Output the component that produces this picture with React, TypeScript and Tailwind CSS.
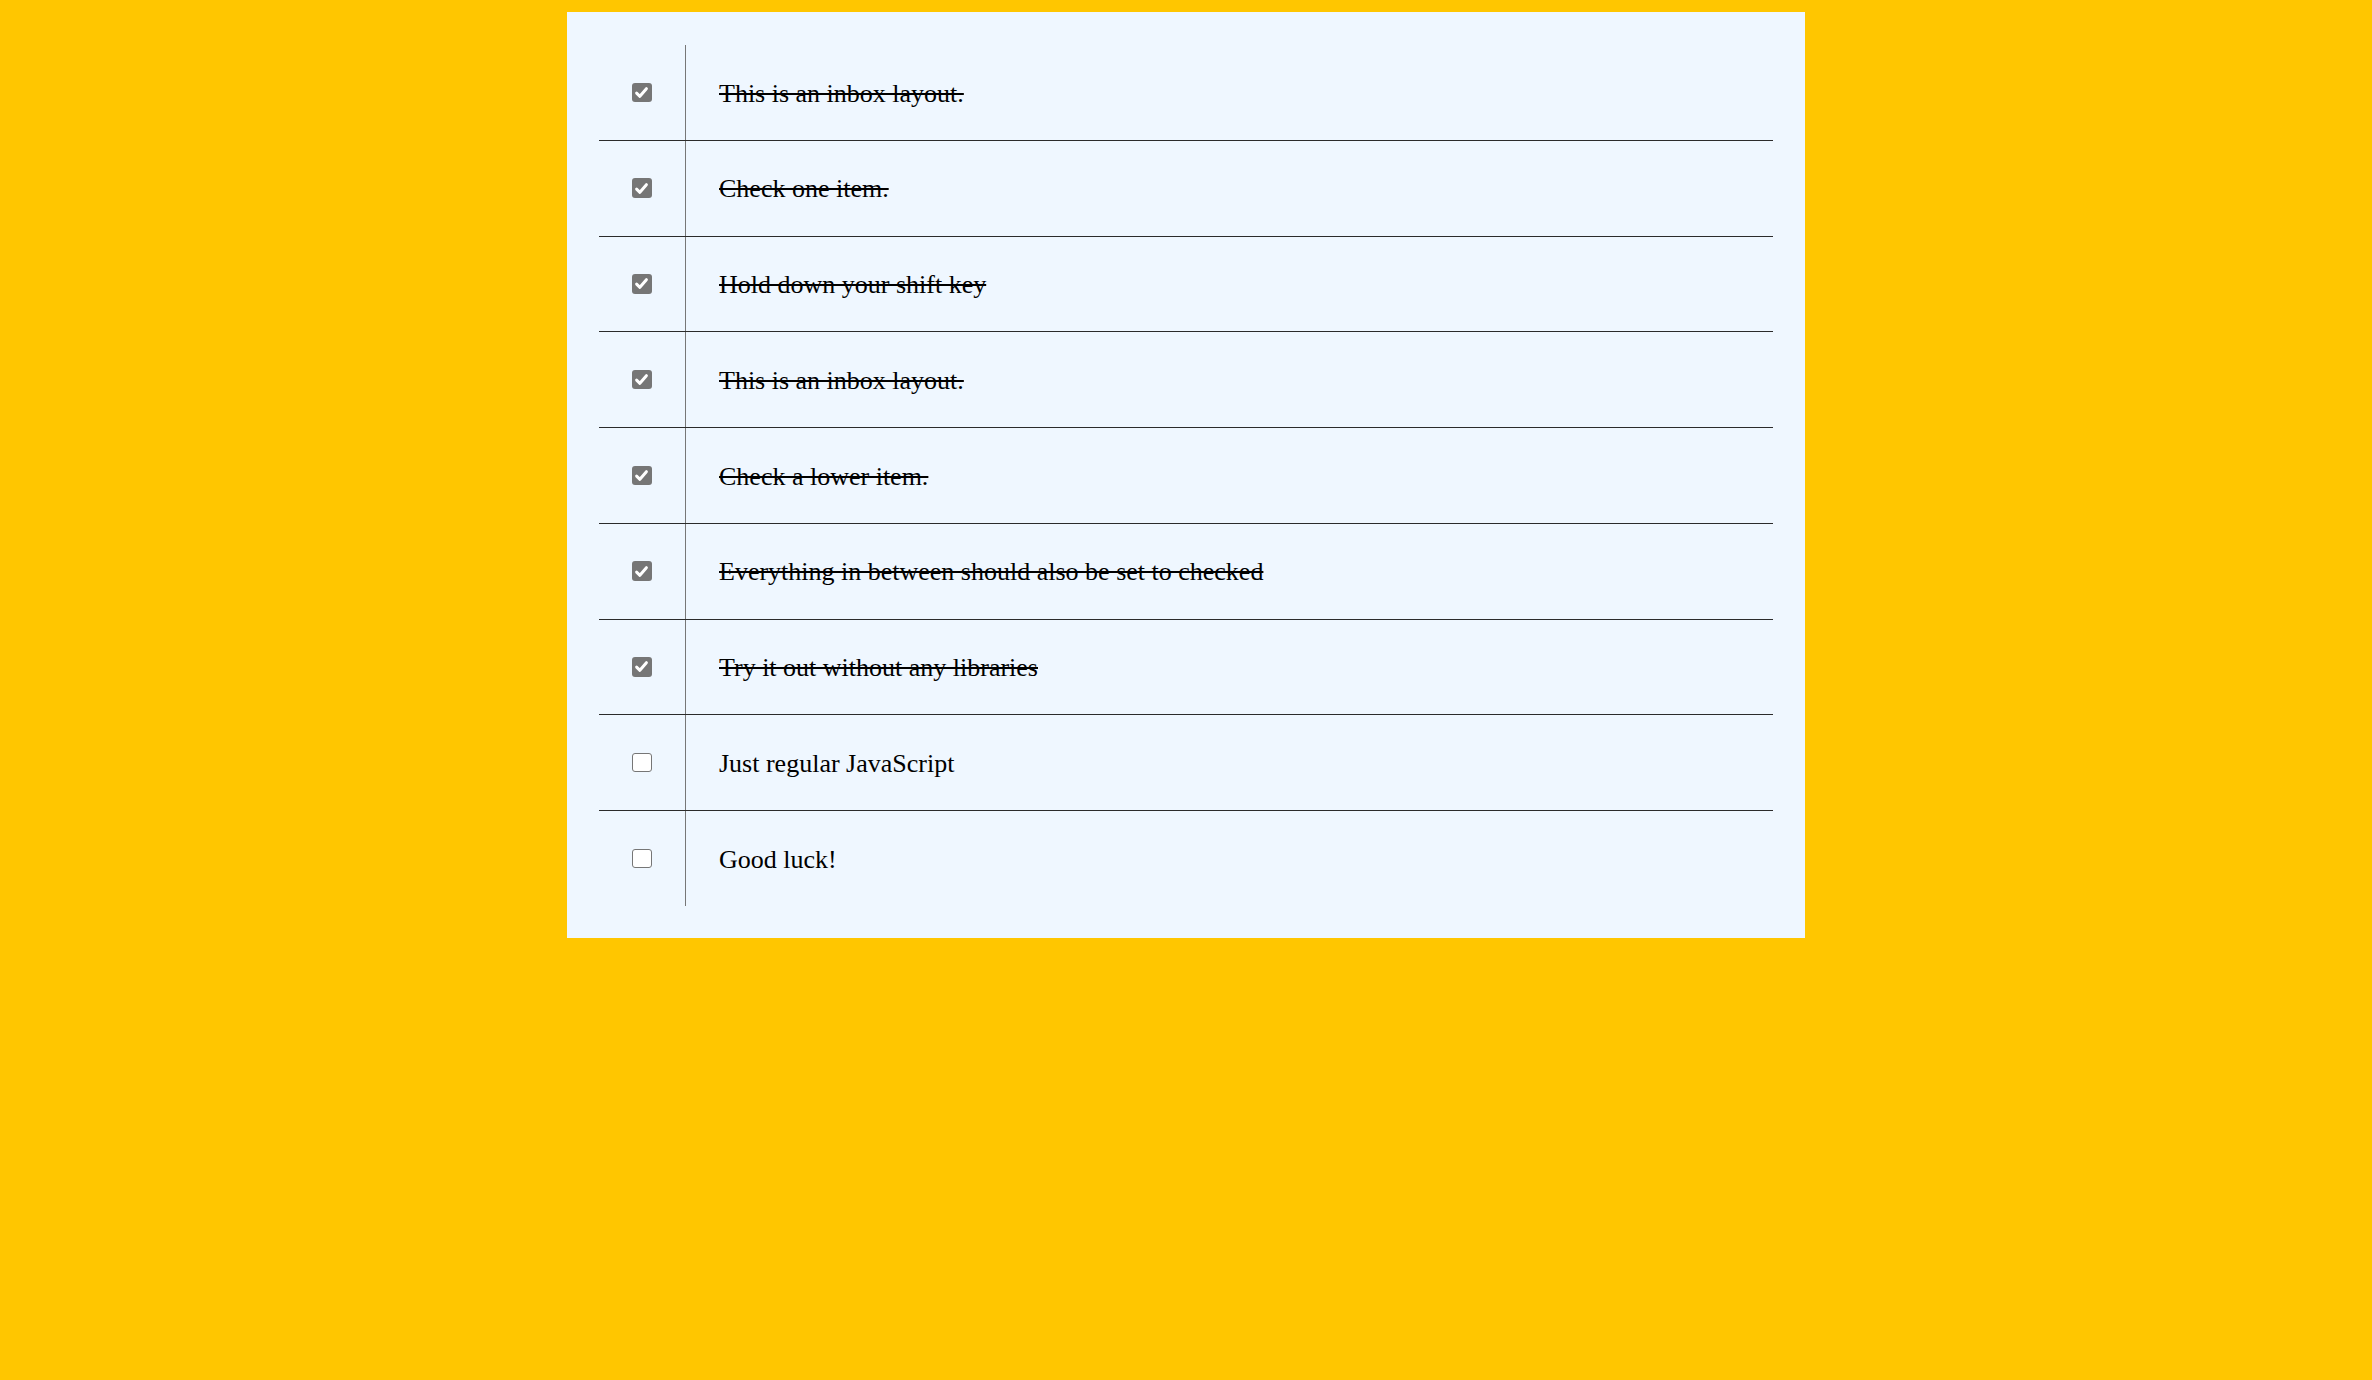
import React from "react";

const initialItems = [
  { text: "This is an inbox layout.", checked: true },
  { text: "Check one item.", checked: true },
  { text: "Hold down your shift key", checked: true },
  { text: "This is an inbox layout.", checked: true },
  { text: "Check a lower item.", checked: true },
  { text: "Everything in between should also be set to checked", checked: true },
  { text: "Try it out without any libraries", checked: true },
  { text: "Just regular JavaScript", checked: false },
  { text: "Good luck!", checked: false },
];

function Checkbox({ checked, onClick }: { checked: boolean; onClick: () => void }) {
  return (
    <button
      type="button"
      role="checkbox"
      aria-checked={checked}
      onClick={onClick}
      className={`ml-[33px] flex h-[19.5px] w-[19.5px] items-center justify-center rounded-[3px] ${
        checked ? "bg-[#767676]" : "border-[1.5px] border-[#767676] bg-white"
      }`}
    >
      {checked && (
        <svg viewBox="0 0 16 16" className="h-[17px] w-[17px]">
          <path
            d="M3.4 8.6 6.5 11.6 12.6 4.4"
            fill="none"
            stroke="white"
            strokeWidth="2.8"
            strokeLinecap="round"
            strokeLinejoin="round"
          />
        </svg>
      )}
    </button>
  );
}

export default function App() {
  const [items, setItems] = React.useState(initialItems);

  const toggle = (index: number) => {
    setItems((prev) =>
      prev.map((it, i) => (i === index ? { ...it, checked: !it.checked } : it))
    );
  };

  return (
    <div className="min-h-screen bg-[#ffc600] pt-[12px] font-['Liberation_Serif',serif]">
      <div className="mx-auto w-[1238px] bg-[#eff7ff] p-[32px] pt-[33px]">
        {items.map((item, index) => (
          <div
            key={index}
            className={`flex items-stretch ${
              index < items.length - 1 ? "border-b border-[#2b2b2b]" : ""
            }`}
          >
            <div className="flex w-[86px] shrink-0 items-center">
              <Checkbox checked={item.checked} onClick={() => toggle(index)} />
            </div>
            <p
              className={`flex-1 border-l border-[#777777] pt-[31.5px] pb-[28.5px] pl-[33px] pr-[30px] text-[26px] leading-[34.75px] text-black ${
                item.checked ? "line-through" : ""
              }`}
            >
              {item.text}
            </p>
          </div>
        ))}
      </div>
    </div>
  );
}
